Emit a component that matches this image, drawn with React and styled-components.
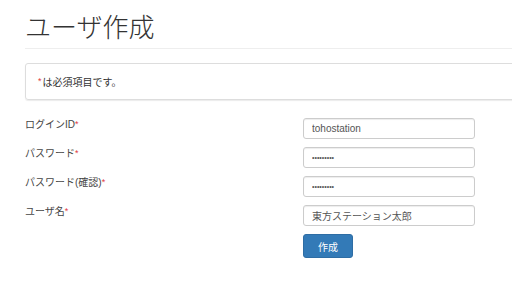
import styled, { createGlobalStyle } from 'styled-components';

const GlobalStyle = createGlobalStyle`
  html, body {
    margin: 0;
    padding: 0;
    overflow: hidden;
    background: #fff;
  }
  body {
    font-family: "Liberation Sans", "Noto Sans CJK JP", sans-serif;
    color: #333;
  }
`;

const fields = [
  { label: 'ログインID', type: 'text', value: 'tohostation' },
  { label: 'パスワード', type: 'password', value: 'tohostati' },
  { label: 'パスワード(確認)', type: 'password', value: 'tohostati' },
  { label: 'ユーザ名', type: 'text', value: '東方ステーション太郎' },
];

const App = () => {
  return (
    <>
      <GlobalStyle />
      <Page>
        <Header>
          <Title>ユーザ作成</Title>
        </Header>
        <Notice>
          <Required>*</Required>は必須項目です。
        </Notice>
        <Form onSubmit={(e) => e.preventDefault()}>
          {fields.map((f) => (
            <Row key={f.label}>
              <Label>
                {f.label}
                <Required>*</Required>
              </Label>
              <Input type={f.type} defaultValue={f.value} readOnly />
            </Row>
          ))}
          <Row>
            <span />
            <div>
              <SubmitButton type="submit">作成</SubmitButton>
            </div>
          </Row>
        </Form>
      </Page>
    </>
  );
};

export default App;

const Page = styled.div`
  width: 620px;
  padding-left: 25px;
`;

const Header = styled.div`
  padding-top: 11px;
  padding-bottom: 7px;
  border-bottom: 1px solid #eee;
`;

const Title = styled.h1`
  margin: 0;
  font-family: "Noto Sans CJK JP", sans-serif;
  font-size: 26px;
  font-weight: 300;
  line-height: 30px;
  color: #333;
`;

const Notice = styled.div`
  margin-top: 14px;
  height: 35px;
  display: flex;
  align-items: center;
  padding-left: 12px;
  border: 1px solid #ddd;
  border-radius: 3px;
  box-shadow: 0 1px 1px rgba(0, 0, 0, 0.08);
  font-size: 10px;
  color: #333;
`;

const Required = styled.span`
  color: #e0393e;
  font-size: 9px;
  margin-right: 1px;
  position: relative;
  top: -1px;
`;

const Form = styled.form`
  margin-top: 18px;
  display: flex;
  flex-direction: column;
  gap: 8px;
`;

const Row = styled.div`
  display: grid;
  grid-template-columns: 278px 172px;
  align-items: start;
`;

const Label = styled.label`
  font-size: 10px;
  line-height: 14px;
  color: #444;
`;

const Input = styled.input`
  box-sizing: border-box;
  width: 172px;
  height: 21px;
  padding: 0 8px;
  border: 1px solid #ccc;
  border-radius: 3px;
  box-shadow: inset 0 1px 1px rgba(0, 0, 0, 0.075);
  font-family: "Liberation Sans", "Noto Sans CJK JP", sans-serif;
  font-size: 10px;
  color: #555;
  outline: none;

  &[type='password'] {
    font-size: 7px;
    letter-spacing: 0;
  }
`;

const SubmitButton = styled.button`
  width: 50px;
  height: 24px;
  padding: 0;
  border: 1px solid #2e6da4;
  border-radius: 3px;
  background: #337ab7;
  color: #fff;
  font-family: "Noto Sans CJK JP", sans-serif;
  font-size: 10px;
  cursor: pointer;
`;
